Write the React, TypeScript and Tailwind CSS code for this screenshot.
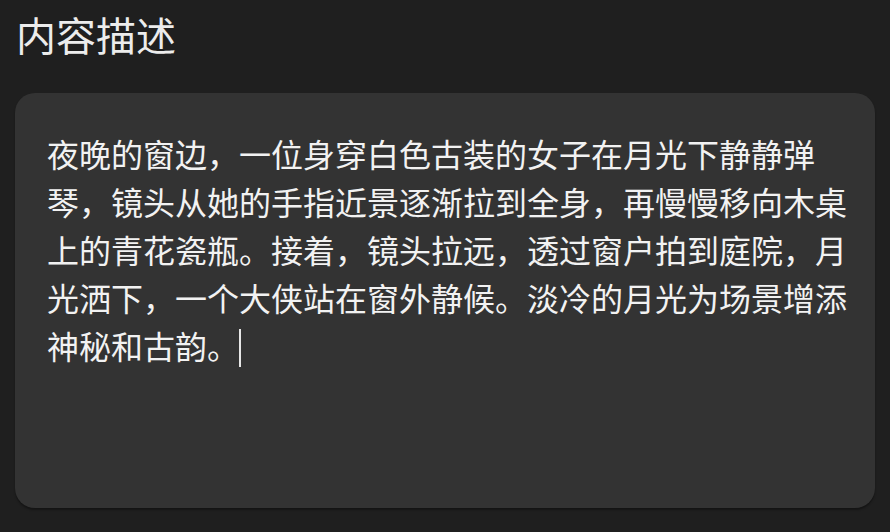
export default function App() {
  const text =
    "夜晚的窗边，一位身穿白色古装的女子在月光下静静弹琴，镜头从她的手指近景逐渐拉到全身，再慢慢移向木桌上的青花瓷瓶。接着，镜头拉远，透过窗户拍到庭院，月光洒下，一个大侠站在窗外静候。淡冷的月光为场景增添神秘和古韵。";

  return (
    <div
      className="w-[890px] h-[532px] bg-[#1f1f1f] px-[15px] pt-[14px] overflow-hidden"
      style={{ fontFamily: '"Noto Sans CJK SC", "Noto Sans", sans-serif' }}
    >
      {/* Title */}
      <h1 className="text-[40px] leading-[40px] text-[#ececec] pl-[1px]">内容描述</h1>

      {/* Description box */}
      <div className="mt-[39px] w-[860px] h-[415px] rounded-[20px] bg-[#333333] pl-[32px] pr-[20px] pt-[36px] shadow-[0_2px_2px_rgba(0,0,0,0.35)]">
        <p className="text-[32px] leading-[48px] text-[#f2f2f2] w-[808px]">
          {text}
          <span className="inline-block w-[2px] h-[38px] bg-[#e6e6e6] align-[-8px]" />
        </p>
      </div>
    </div>
  );
}
